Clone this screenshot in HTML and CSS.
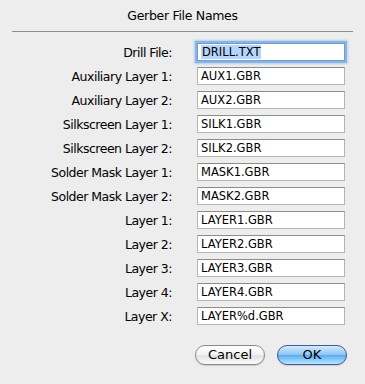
FILE: index.html
```html
<!DOCTYPE html>
<html lang="en">
<head>
    <meta charset="UTF-8">
    <title>Gerber File Names</title>
    <link rel="stylesheet" href="styles.css">
</head>
<body>
<div class="dialog">
    <div class="title">Gerber File Names</div>
    <div class="form">
        <label>Drill File:</label>
        <div class="field focus"><span class="sel">DRILL.TXT</span></div>
        <label>Auxiliary Layer 1:</label>
        <div class="field">AUX1.GBR</div>
        <label>Auxiliary Layer 2:</label>
        <div class="field">AUX2.GBR</div>
        <label>Silkscreen Layer 1:</label>
        <div class="field">SILK1.GBR</div>
        <label>Silkscreen Layer 2:</label>
        <div class="field">SILK2.GBR</div>
        <label>Solder Mask Layer 1:</label>
        <div class="field">MASK1.GBR</div>
        <label>Solder Mask Layer 2:</label>
        <div class="field">MASK2.GBR</div>
        <label>Layer 1:</label>
        <div class="field">LAYER1.GBR</div>
        <label>Layer 2:</label>
        <div class="field">LAYER2.GBR</div>
        <label>Layer 3:</label>
        <div class="field">LAYER3.GBR</div>
        <label>Layer 4:</label>
        <div class="field">LAYER4.GBR</div>
        <label>Layer X:</label>
        <div class="field">LAYER%d.GBR</div>
    </div>
    <div class="buttons">
        <div class="btn">Cancel</div>
        <div class="btn default">OK</div>
    </div>
</div>
</body>
</html>
```

FILE: styles.css
```css
*{
    margin: 0;
    padding: 0;
    box-sizing: border-box;
}
body{
    background-color: #ededed;
    font-family: "DejaVu Sans", sans-serif;
    font-size: 12.5px;
    color: #000;
}
.dialog{
    width: 365px;
    height: 384px;
}
.title{
    height: 32px;
    line-height: 32px;
    text-align: center;
    margin: 0 12px;
    border-bottom: 1px solid #8e8e8e;
    letter-spacing: -0.3px;
}
.form{
    display: grid;
    grid-template-columns: 172px 148px;
    column-gap: 25px;
    row-gap: 6px;
    padding-top: 11px;
    align-items: center;
}
.form label{
    text-align: right;
    white-space: nowrap;
    letter-spacing: -0.5px;
}
.field{
    height: 18px;
    line-height: 16px;
    padding: 0 3px;
    background-color: #fff;
    border: 1px solid #b4b4b4;
    border-top-color: #8c8c8c;
    font-size: 11.5px;
}
.field.focus{
    border-color: #6d9ed3;
    box-shadow: 0 0 0 2px #8cb4e3, 0 0 2px 3px #b3cfee;
}
.sel{
    background-color: #b5d5ff;
    padding: 0 1px;
}
.buttons{
    display: flex;
    gap: 12px;
    padding: 20px 0 0 195px;
}
.btn{
    width: 70px;
    height: 20px;
    line-height: 18px;
    border-radius: 10px;
    text-align: center;
    border: 1px solid #8a8a8a;
    background: linear-gradient(#ffffff, #f2f2f2 50%, #e2e2e2 52%, #fafafa);
    box-shadow: 0 1px 1px rgba(0,0,0,0.15);
    font-size: 13px;
}
.btn.default{
    border-color: #44589c;
    background: linear-gradient(#d5ecfc, #89c4f2 50%, #5aaef0 52%, #b9e6ff);
}
```
